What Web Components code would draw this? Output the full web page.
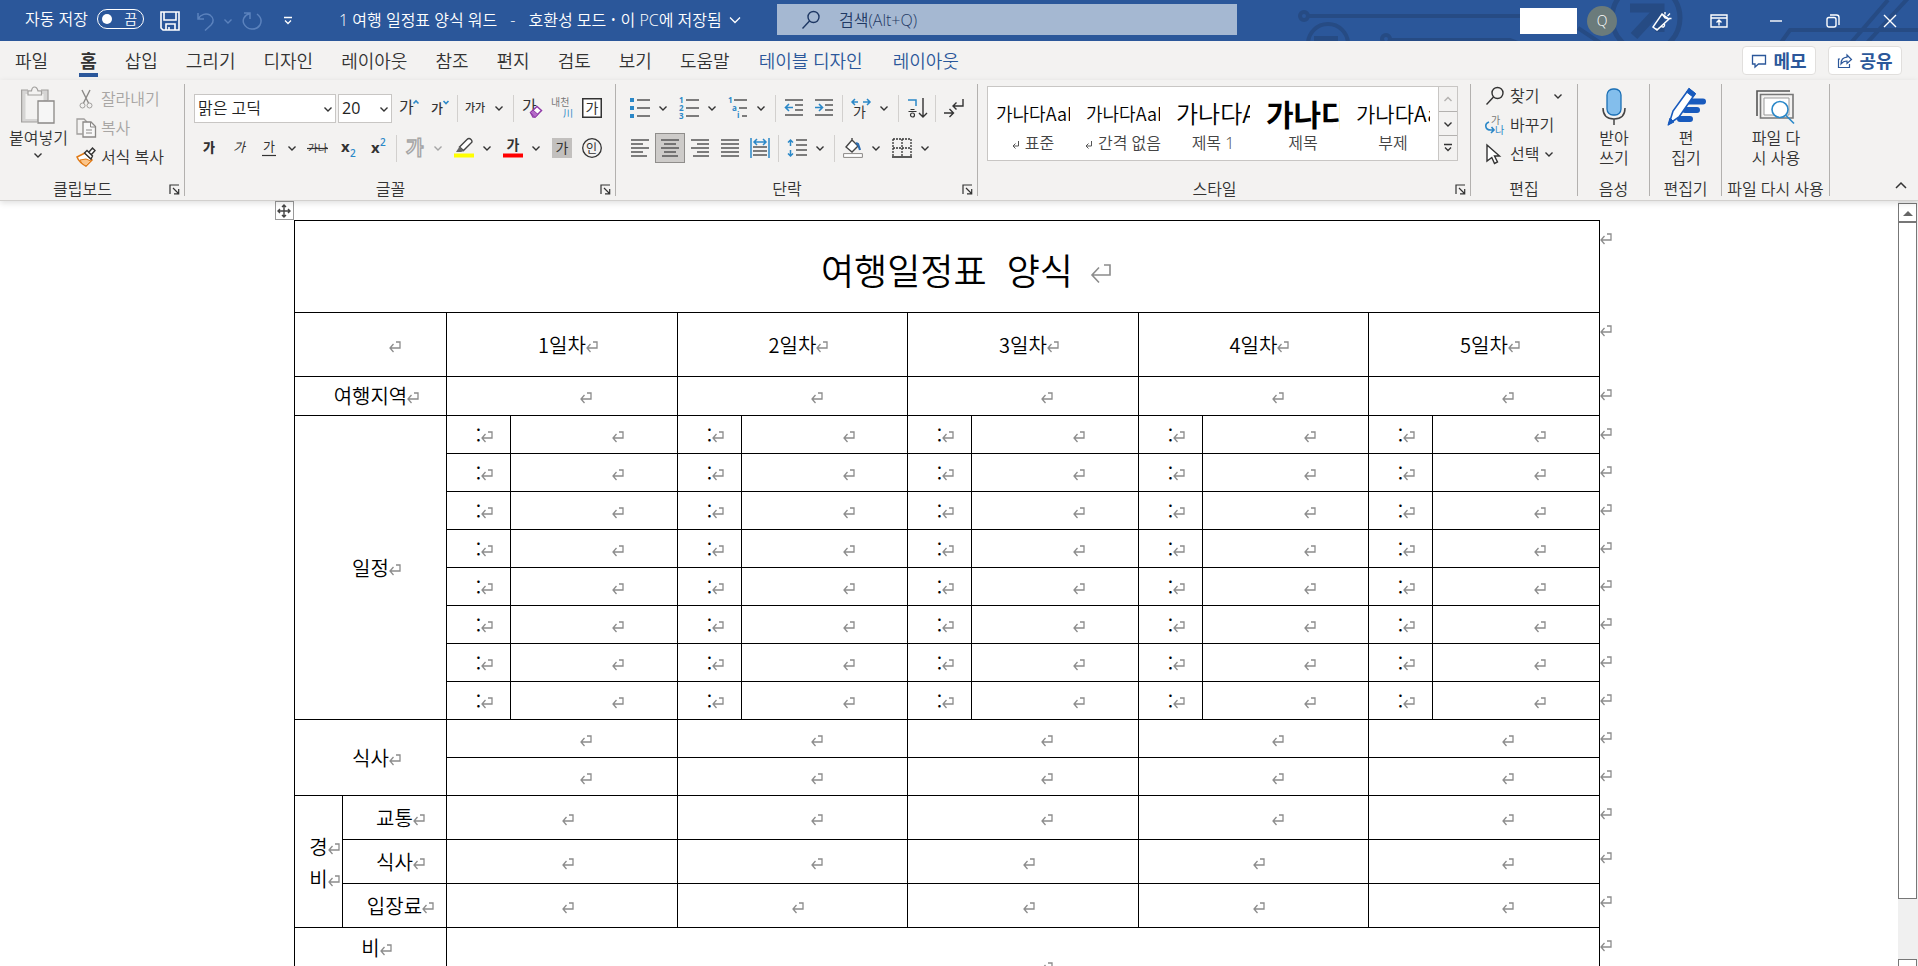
<!DOCTYPE html>
<html lang="ko">
<head>
<meta charset="utf-8">
<title>1 여행 일정표 양식 워드</title>
<style>
    html, body {
        margin: 0;
        height: 100%;
        overflow: hidden;
    }

    body {
        --fontBody: "Open Sans", "Noto Sans CJK KR", sans-serif;
        --fontDocument: "Noto Sans CJK KR", sans-serif;
        --colorBrand: #2b579a;
        --colorRibbon: #f3f2f1;
        --colorText: #333;
        --colorLine: #b3b1af;
        font-family: var(--fontBody);
        font-size: 16px;
        font-weight: 350;
        line-height: 20px;
        color: var(--colorText);
    }
</style>
</head>
<body>
<word-app></word-app>

<script>
const KO = 'font-family="Noto Sans CJK KR, sans-serif"';
const lines = (rows, color = '#555') => rows.map(([x1, x2, y]) =>
    `<path d="M${x1} ${y}H${x2}" stroke="${color}" stroke-width="1.5"/>`).join('');

// every icon: [width, height, markup]
const icons = {
    chevron: [10, 10, '<path d="M1.5 3.5L5 7l3.5-3.5" stroke-width="1.4"/>'],
    chevronUp: [10, 10, '<path d="M1.5 7L5 3.5 8.500 7" stroke-width="1.4"/>'],
    titleChevron: [12, 12, '<path d="M1 3.500l5 5 5-5" stroke-width="1.300"/>'],
    collapse: [12, 12, '<path d="M1 9l5-5 5 5" stroke-width="1.500"/>'],
    more: [10, 10, '<path d="M1 1.500h8M2 4.500l3 3 3-3" stroke-width="1.300"/>'],
    launcher: [11, 11, '<path d="M1 10V1h9M4 4l5.500 5.500M9.700 5v4.800H5" stroke-width="1.200"/>'],
    save: [20, 20, '<path d="M1 1h18v18H3l-2-2zM4 1v8h12V1M6 19v-6h9v6M9 19v-3" stroke-width="1.600"/>'],
    undo: [20, 20, '<path d="M2 2v6h6M2 8c3-5 8-6 12-4 4 3 4 7 1 10l-6 5.500" stroke-width="1.500"/>'],
    redo: [20, 20, '<path d="M2 2h6v6M8 2.500C2 4 0 9 2 13c3 6 12 7 16 1 2-4 1-8-3-11" stroke-width="1.500"/>'],
    search: [20, 20, '<circle cx="12.500" cy="7" r="5.500" stroke-width="1.400"/><path d="M8.500 11L1.500 18.500" stroke-width="1.400"/>'],
    coming: [20, 20, '<path d="M1 16L10 3l7 5L5 19zM3.500 17.500c2 1.500 3 .5 4-1M9 15c2 2 4 1 3.500-2M10 3l3 4 4 1M13 3.500V1M15.500 5L18 2.500M17 7.500h2.500" stroke-width="1.400"/>'],
    display: [18, 16, '<path d="M1 2h16v12H1zM1 5h16M9 12.500v-5M6.500 9.500L9 7l2.500 2.500" stroke-width="1.400"/>'],
    min: [14, 14, '<path d="M1 7h12" stroke-width="1.400"/>'],
    restore: [14, 14, '<rect x="1" y="3.500" width="9" height="9.500" rx="2" stroke-width="1.400"/><path d="M4 1h6.500Q13 1 13 3.500V11" stroke-width="1.400"/>'],
    close: [14, 14, '<path d="M1 1l12 12M13 1L1 13" stroke-width="1.400"/>'],
    memo: [16, 16, '<path d="M1.500 2.500h13v8.500H7.500L4 14v-3H1.500z" stroke-width="1.300"/>'],
    share: [16, 16, '<path d="M3 6H1.500v8.500h11V11M10 2l4.500 4.500L10 10.500V8C7 8 5.500 9 4 11c0-4 2-6.500 6-6.800z" stroke-width="1.200"/>'],
    paste: [34, 38, '<path d="M0 4h27v32H0z" fill="#d6d5d4" stroke="none"/><path d="M4.500 8h18v25h-18z" fill="#f3f2f1" stroke="none"/><path d="M16 36H.6V4H7M20 4h7v10" stroke="#a19f9d" stroke-width="1.200"/><path d="M7 9V5h3.500Q11 1 13.500 1T17 5h3.500v4z" fill="#f3f2f1" stroke="#a19f9d" stroke-width="1.200"/><path d="M17 15h16v22H17z" fill="#f6f6f6" stroke="#8a8886" stroke-width="1.300"/>'],
    cut: [20, 20, '<path d="M6 1l6.500 13M14 1L7.500 14" stroke="#8a8886" stroke-width="1.400"/><circle cx="6.500" cy="16.500" r="2.500" stroke="#a19f9d"/><circle cx="13.500" cy="16.500" r="2.500" stroke="#a19f9d"/>'],
    copy: [20, 20, '<path d="M6.500 16H1V1h7l3 3" stroke="#a19f9d" stroke-width="1.300"/><path d="M7 4h8l4.500 4.500V19H7z" fill="#f8f8f8" stroke="#8a8886" stroke-width="1.300"/><path d="M14.500 4v5h5M10 12h6M10 15h6" stroke="#8a8886"/>'],
    brush: [20, 20, '<path d="M1 10l8-4 7 7-6 6C8 18 3 15 1 10z" fill="#fff" stroke="#e07b18" stroke-width="1.500"/><path d="M4 13l6-1 5 2-5 5c-2-1-5-3-6-6z" fill="#fbc58a" stroke="#e07b18"/><path d="M8.500 6L11 3.500 16.500 9 15 12zM13 5l3.500-4L19 3.500 15.500 7.500" fill="#fff" stroke="#333" stroke-width="1.400"/>'],
    grow: [20, 20, `<text ${KO} x="0" y="15" font-size="16">가</text><path d="M14.500 5.500L17 3l2.500 2.500" stroke="#2b88c8" stroke-width="1.600"/>`],
    shrink: [20, 20, `<text ${KO} x="2" y="15" font-size="13" font-weight="500">가</text><path d="M14.500 3L17 5.500 19.500 3" stroke="#2b88c8" stroke-width="1.600"/>`],
    caseKo: [28, 20, `<text ${KO} x="3" y="14" font-size="11" font-weight="500">가가</text>`],
    clear: [20, 20, `<text ${KO} x="0" y="14" font-size="16">가</text><path d="M8.500 14.500l6.500-6 4.500 4-6.500 6.500H11z" fill="#fff" stroke="#8f3aa8" stroke-width="1.500"/><path d="M11 12l5 4.500-3 3-4.500-5z" fill="#b46ac8" stroke="#8f3aa8"/>`],
    ruby: [22, 22, `<text ${KO} x="0" y="9" font-size="10" fill="#777">내천</text><text ${KO} x="12" y="20" font-size="10" fill="#2b88c8">川</text>`],
    boxed: [20, 20, `<rect x="0.750" y="0.750" width="18.500" height="18.500" fill="#fff" stroke="#333" stroke-width="1.500"/><text ${KO} x="3.500" y="15" font-size="14">가</text>`],
    bold: [20, 20, `<text ${KO} x="4" y="14" font-size="13" font-weight="900">가</text>`],
    italic: [20, 20, `<text ${KO} x="4" y="14" font-size="13" font-style="italic">가</text>`],
    under: [20, 20, `<text ${KO} x="4" y="13" font-size="13">가</text><path d="M3 17.500h14" stroke-width="1.200"/>`],
    strike: [22, 20, `<text ${KO} x="1" y="14" font-size="10.500">가나</text><path d="M0 10.500h21" stroke-width="1.200"/>`],
    sub: [20, 20, '<text x="3" y="14" font-size="15" font-weight="700" font-family="Open Sans, sans-serif">x</text><text x="12" y="19" font-size="10" font-weight="600" fill="#2b88c8" font-family="Open Sans, sans-serif">2</text>'],
    sup: [20, 20, '<text x="3" y="15" font-size="15" font-weight="700" font-family="Open Sans, sans-serif">x</text><text x="12" y="8" font-size="10" font-weight="600" fill="#2b88c8" font-family="Open Sans, sans-serif">2</text>'],
    effect: [20, 20, `<text ${KO} x="1" y="17" font-size="19" font-weight="700" style="fill:#eee;stroke:#a5a5a5;stroke-width:1.4">가</text>`],
    marker: [20, 20, '<path d="M5.500 9L13 1.500Q15-.5 17 1.500T17 5L9.500 12.500z" fill="#fff" stroke="#444" stroke-width="1.400"/><path d="M5.500 8.500L10 13l-3 1H2z" fill="#666" stroke="none"/><path d="M0 15.500h20v4H0z" fill="#ff0" stroke="none"/>'],
    color: [20, 20, `<text ${KO} x="3.500" y="12" font-size="14" font-weight="700">가</text><path d="M0 15.500h20v4H0z" fill="#f00" stroke="none"/>`],
    shade: [20, 20, `<path d="M0 0h20v20H0z" fill="#c2c0be" stroke="none"/><text ${KO} x="3.500" y="15" font-size="14">가</text>`],
    circled: [20, 20, `<circle cx="10" cy="10" r="9.300" stroke="#333" stroke-width="1.300"/><text ${KO} x="4" y="14.500" font-size="12">인</text>`],
    bullets: [20, 20, '<path d="M0 0h4v4H0zM0 8h4v4H0zM0 16h4v4H0z" fill="#2b88c8" stroke="none"/>' + lines([[7, 20, 2], [7, 20, 10], [7, 20, 18]])],
    numbers: [20, 22, '<g font-family="Open Sans, sans-serif" font-size="8" font-weight="700" fill="#2b88c8"><text x="0" y="6">1</text><text x="0" y="14">2</text><text x="0" y="22">3</text></g>' + lines([[7, 20, 3], [7, 20, 11], [7, 20, 19]])],
    levels: [20, 22, '<g font-family="Open Sans, sans-serif" font-size="8" font-weight="700" fill="#2b88c8"><text x="0" y="6">1</text><text x="4" y="14">a</text><text x="9" y="21">i</text></g>' + lines([[6, 19, 3], [11, 19, 11], [14, 19, 19]])],
    outdent: [20, 20, lines([[1, 19, 2], [11, 19, 7], [11, 19, 12], [1, 19, 17]]) + '<path d="M9 9.500H2M5 6L1.500 9.500 5 13" stroke="#2b88c8" stroke-width="1.600"/>'],
    indent: [20, 20, lines([[1, 19, 2], [11, 19, 7], [11, 19, 12], [1, 19, 17]]) + '<path d="M1 9.500h7M5 6l3.500 3.500L5 13" stroke="#2b88c8" stroke-width="1.600"/>'],
    spacing: [20, 20, `<text ${KO} x="2" y="19" font-size="14">가</text><path d="M7 4H1M4 1L1 4l3 3M12 4h7M16 1l3 3-3 3" stroke="#2b88c8" stroke-width="1.500"/>`],
    sort: [20, 20, '<path d="M1 2h8v6" stroke="#2b88c8" stroke-width="1.500"/><path d="M3.500 11.500h4M1.500 13.500h8" stroke-width="1.200"/><circle cx="5.500" cy="17" r="2" stroke-width="1.200"/><path d="M16 0v19M12 15l4 4 4-4" stroke-width="1.400"/>'],
    marks: [22, 20, '<path d="M20 1v7H10M13.500 4.500L10 8l3.500 3.500M1 15h9M6.500 11l4 4-4 4" stroke-width="1.400"/>'],
    alignL: [18, 18, lines([[0, 18, 1], [0, 12, 5], [0, 18, 9], [0, 12, 13], [0, 16, 17]])],
    alignC: [18, 18, lines([[0, 18, 1], [3, 15, 5], [0, 18, 9], [3, 15, 13], [1, 17, 17]])],
    alignR: [18, 18, lines([[0, 18, 1], [6, 18, 5], [0, 18, 9], [6, 18, 13], [2, 18, 17]])],
    alignJ: [18, 18, lines([[0, 18, 1], [0, 18, 5], [0, 18, 9], [0, 18, 13], [0, 18, 17]])],
    spread: [20, 20, lines([[3, 17, 9], [3, 17, 13], [3, 17, 17]]) + '<path d="M1 0v20M19 0v20M4 4h12M7 1L4 4l3 3M13 1l3 3-3 3" stroke="#2b88c8" stroke-width="1.500"/>'],
    leading: [20, 20, lines([[9, 20, 2], [9, 20, 7], [9, 20, 12], [9, 20, 17]]) + '<path d="M3.500 2v6M1 4.500L3.500 2 6 4.500M3.500 12v6M1 15.500L3.500 18 6 15.500" stroke="#2b88c8" stroke-width="1.500"/>'],
    fill: [20, 20, '<path d="M3 9l6-7 6 6-6 6zM9 2V0" fill="#fff" stroke="#444" stroke-width="1.400"/><path d="M13 5l2 1 2 6" stroke="#2b6cb0" stroke-width="2.200"/><path d="M.6 15.600h18.800v3.800H.6z" fill="#fff" stroke="#8a8886"/>'],
    borders: [20, 20, '<path d="M1 1h18v18M1 1v18M10 1v18M1 10h18" stroke-dasharray="2 1" stroke-width="1.300"/><path d="M0 19h20" stroke-width="1.600"/>'],
    replace: [20, 20, `<text ${KO} x="6" y="9" font-size="10" fill="#777">가</text><text ${KO} x="10" y="18.500" font-size="10" fill="#2b88c8">나</text><path d="M4 7C-1 9 0 15 6 15h3M6.500 12L9 15l-3 3" stroke="#2b88c8" stroke-width="1.600"/>`],
    pointer: [20, 20, '<path d="M2 1l12.500 11H9.500l3 6-3 1.500-2.700-6L2 17z" fill="#fff" stroke-width="1.400"/>'],
    mic: [26, 38, '<rect x="6" y="1" width="14" height="26" rx="6" fill="#83beec" stroke="#1a6fb5" stroke-width="1.300"/><path d="M2 20q0 11 11 11t11-11M13 31v6" stroke="#444" stroke-width="1.500"/>'],
    editor: [40, 40, '<path d="M22 14.500h15M19 23h12M14 32h10" stroke="#185abd" stroke-width="6" stroke-linecap="round"/><path d="M3 37l4-13L23 2l6 5-16 23z" fill="#fff" stroke="#185abd" stroke-width="1.600"/><path d="M20.500 5L23 1.500l6.500 5L27 10zM2 38l2-7 4 4z" fill="#185abd" stroke="#185abd"/>'],
    reuse: [40, 36, '<path d="M1 27V2h33" stroke="#555" stroke-width="1.600"/><path d="M4.500 29V5.500H37V29z" stroke="#777" stroke-width="1.600"/><path d="M8 9h25v17H8z" fill="#fff" stroke="#999"/><circle cx="24" cy="20.500" r="8" fill="#fff" stroke="#2b88c8" stroke-width="1.600"/><path d="M30 26.500l8 8" stroke="#2b88c8" stroke-width="1.600"/>'],
    returnMark: [12, 12, '<path d="M7 1h4v6H1M4.500 3L1 7l3.500 4" stroke="#8c8c8c" stroke-width="1.300"/>'],
    bigReturn: [22, 22, '<path d="M14 2h6v10H2M9 4.500L2 12l7 7.500" stroke="#8c8c8c" stroke-width="1.600"/>'],
    move: [14, 14, '<path d="M7 1v12M1 7h12M5 3l2-2 2 2M5 11l2 2 2-2M3 5L1 7l2 2M11 5l2 2-2 2" stroke-width="1.400"/>'],
    scrollUp: [10, 6, '<path d="M0 6l5-5 5 5z" fill="#666" stroke="none"/>']
};

class OfficeIcon extends HTMLElement {
    constructor() {
        super();
        this.attachShadow({mode: 'open'});
    }

    connectedCallback() {
        const [w, h, body] = icons[this.getAttribute('name')];
        this.shadowRoot.innerHTML = `
            <style>
                :host { display: inline-block; flex: none; line-height: 0; font-weight: 400; }
                svg { display: block; overflow: visible; fill: none; stroke: currentColor; }
                text { fill: currentColor; stroke: none; }
                text[fill="#2b88c8"], g[fill="#2b88c8"] text { fill: #2b88c8; }
                text[fill="#777"] { fill: #777; }
            </style>
            <svg width="${w}" height="${h}" viewBox="0 0 ${w} ${h}" aria-hidden="true">${body}</svg>`;
    }
}
customElements.define('office-icon', OfficeIcon);

// icon button of the ribbon, "menu" adds the drop-down arrow
class ToolButton extends HTMLElement {
    constructor() {
        super();
        this.attachShadow({mode: 'open'});
        const label = this.getAttribute('label');
        const menu = this.hasAttribute('menu')
            ? `<button class="menu" aria-label="${label} 옵션"><office-icon name="chevron"></office-icon></button>` : '';
        this.shadowRoot.innerHTML = `
            <style>
                :host { display: flex; flex: none; }
                button {
                    display: flex;
                    align-items: center;
                    justify-content: center;
                    width: 30px;
                    height: 30px;
                    padding: 0;
                    border: 0;
                    background: none;
                    color: inherit;
                }
                .menu { width: 16px; margin-right: 3px; }
                :host([pressed]) button {
                    background: #cdcbc9;
                    border: 1px solid #8f8d8b;
                }
                :host([muted]) .menu { color: #a5a5a5; }
            </style>
            <button aria-label="${label}"><office-icon name="${this.getAttribute('icon')}"></office-icon></button>${menu}`;
    }
}
customElements.define('tool-button', ToolButton);

class RibbonGroup extends HTMLElement {
    constructor() {
        super();
        this.attachShadow({mode: 'open'});
        const launcher = this.hasAttribute('launcher')
            ? '<button aria-label="자세히"><office-icon name="launcher"></office-icon></button>' : '';
        this.shadowRoot.innerHTML = `
            <style>
                :host {
                    display: flex;
                    flex-direction: column;
                    flex: none;
                    border-right: 1px solid var(--colorLine);
                }
                .body { flex: 1; padding: 4px 8px 0 9px; }
                footer {
                    display: flex;
                    align-items: center;
                    height: 14px;
                    white-space: nowrap;
                }
                span { flex: 1; text-align: center; }
                button {
                    display: flex;
                    padding: 0 4px;
                    border: 0;
                    background: none;
                    color: inherit;
                }
            </style>
            <div class="body"><slot></slot></div>
            <footer><span>${this.getAttribute('label')}</span>${launcher}</footer>`;
    }
}
customElements.define('ribbon-group', RibbonGroup);

class StyleCard extends HTMLElement {
    constructor() {
        super();
        this.attachShadow({mode: 'open'});
        this.shadowRoot.innerHTML = `
            <style>
                :host { display: block; flex: 1 1 0; min-width: 0; }
                button {
                    display: block;
                    width: 100%;
                    height: 100%;
                    padding: 0 8px 2px;
                    border: 0;
                    background: none;
                    font: inherit;
                    color: #444;
                }
                .sample {
                    display: flex;
                    align-items: center;
                    height: 40px;
                    overflow: hidden;
                    white-space: nowrap;
                    font-family: var(--fontDocument);
                    color: #000;
                }
                .name {
                    display: flex;
                    align-items: center;
                    justify-content: center;
                    gap: 6px;
                    white-space: nowrap;
                }
                svg { flex: none; margin-top: 4px; }
            </style>
            <button>
                <span class="sample" style="font-size: ${this.getAttribute('size')}px; font-weight: ${this.getAttribute('weight') || 'inherit'}">가나다AaBb</span>
                <span class="name">${this.hasAttribute('para') ? '<svg width="7" height="8" fill="none" stroke="#555"><path d="M6.500 0v5H1M3.500 2.500L1 5l2.500 2.500"/></svg>' : ''}<slot></slot></span>
            </button>`;
    }
}
customElements.define('style-card', StyleCard);

class TitleBar extends HTMLElement {
    constructor() {
        super();
        this.attachShadow({mode: 'open'});
        this.shadowRoot.innerHTML = `
            <style>
                :host {
                    position: relative;
                    display: grid;
                    grid-template-columns: minmax(0, 777fr) minmax(0, 460fr) minmax(0, 681fr);
                    align-items: center;
                    height: 41px;
                    background: var(--colorBrand);
                    color: #fff;
                    overflow: hidden;
                }
                .art { position: absolute; right: 0; top: 0; }
                .left, .right, label.auto, .search { display: flex; align-items: center; white-space: nowrap; }
                .left { padding-left: 25px; }
                .right { position: relative; justify-content: flex-end; }
                button { display: flex; align-items: center; justify-content: center; padding: 0; border: 0; background: none; color: inherit; font: inherit; }
                .auto { gap: 9px; margin: 0 15px 4px 0; }
                .auto span { position: relative; width: 45px; height: 18px; border: 1px solid #fff; border-radius: 10px; }
                .auto span::before { content: ""; position: absolute; left: 4px; top: 4px; width: 10px; height: 10px; border-radius: 50%; background: #fff; }
                .auto b { position: absolute; right: 6px; top: -1px; font-weight: inherit; font-size: 14px; }
                .auto input { position: absolute; inset: 0; margin: 0; opacity: 0; }
                .tool { width: 22px; height: 26px; }
                .dim { color: #5b82bd; }
                .undo { margin-left: 14px; }
                .redo { margin: 0 14px 0 2px; }
                .name { margin: 0 0 2px 40px; gap: 13px; }
                .name office-icon { margin-left: -6px; }
                .search { height: 31px; margin-bottom: 2px; background: #a5b8d2; color: #1f3864; }
                .search office-icon { margin: 0 18px 0 24px; }
                .search input { flex: 1; min-width: 0; border: 0; padding: 0; background: none; font: inherit; color: inherit; outline: 0; }
                .search input::placeholder { color: #1f3864; opacity: 1; }
                .user { width: 57px; height: 26px; margin-right: 10px; background: #fff; }
                .avatar { width: 30px; height: 30px; border-radius: 50%; background: #6b7b7b; font-size: 14px; margin-right: 16px; }
                .win { width: 57px; height: 38px; }
            </style>
            <svg class="art" width="648" height="41" fill="none" stroke="#264b84" stroke-width="4" aria-hidden="true">
                <circle cx="34" cy="16" r="4"/><path d="M38 16h212M120 40h120l8 3M308 28l24 16M510 44l10-14h128M580 44l38-44M596 44l44-48"/>
                <circle cx="58" cy="44" r="20"/><path d="M46 38h20v6H46z" fill="#264b84"/><circle cx="116" cy="39" r="4"/>
                <circle cx="376" cy="18" r="34" stroke-width="5"/><path d="M360 8h30v24M390 8l-26 28" stroke-width="9"/>
            </svg>
            <div class="left">
                <label class="auto">자동 저장 <span><input type="checkbox"><b>끔</b></span></label>
                <button class="tool" aria-label="저장"><office-icon name="save"></office-icon></button>
                <button class="tool dim undo" aria-label="실행 취소"><office-icon name="undo"></office-icon></button>
                <button class="tool dim" aria-label="실행 취소 목록"><office-icon name="chevron"></office-icon></button>
                <button class="tool dim redo" aria-label="다시 실행"><office-icon name="redo"></office-icon></button>
                <button class="tool" aria-label="빠른 실행 도구 모음 사용자 지정"><office-icon name="more"></office-icon></button>
                <button class="name"><span>1 여행 일정표 양식 워드</span><span>-</span><span>호환성 모드 • 이 PC에 저장됨</span><office-icon name="titleChevron"></office-icon></button>
            </div>
            <label class="search"><office-icon name="search"></office-icon><input type="text" aria-label="검색" placeholder="검색(Alt+Q)"></label>
            <div class="right">
                <div class="user"></div>
                <button class="avatar" aria-label="계정">Q</button>
                <button class="win" aria-label="출시 예정 기능"><office-icon name="coming"></office-icon></button>
                <button class="win" aria-label="리본 메뉴 표시 옵션"><office-icon name="display"></office-icon></button>
                <button class="win" aria-label="최소화"><office-icon name="min"></office-icon></button>
                <button class="win" aria-label="이전 크기로 복원"><office-icon name="restore"></office-icon></button>
                <button class="win" aria-label="닫기"><office-icon name="close"></office-icon></button>
            </div>`;
    }
}
customElements.define('title-bar', TitleBar);

class TabStrip extends HTMLElement {
    constructor() {
        super();
        this.attachShadow({mode: 'open'});
        const tabs = ['파일', '홈', '삽입', '그리기', '디자인', '레이아웃', '참조', '편지', '검토', '보기', '도움말', '테이블 디자인', '레이아웃'];
        this.shadowRoot.innerHTML = `
            <style>
                :host {
                    display: flex;
                    align-items: center;
                    justify-content: space-between;
                    height: 39px;
                    padding-right: 16px;
                    background: var(--colorRibbon);
                }
                nav, .actions { display: flex; }
                button { display: flex; align-items: center; border: 0; background: none; font: inherit; font-size: 18px; color: inherit; white-space: nowrap; }
                nav button { position: relative; height: 39px; padding: 0 14px; }
                nav button:first-child { padding: 0 18px 0 15px; }
                nav .on { font-weight: 700; }
                nav .on::after { content: ""; position: absolute; left: 13px; right: 13px; bottom: 3px; height: 4px; background: var(--colorBrand); }
                nav .context { padding: 0 15px; color: var(--colorBrand); }
                .actions { gap: 12px; }
                .actions button { gap: 6px; width: 74px; height: 29px; padding: 0; justify-content: center; border: 1px solid #e1dfdd; border-radius: 4px; background: #fff; color: var(--colorBrand); font-weight: 700; }
            </style>
            <nav>${tabs.map((tab, i) => `<button class="${i === 1 ? 'on' : i > 10 ? 'context' : ''}">${tab}</button>`).join('')}</nav>
            <div class="actions">
                <button><office-icon name="memo"></office-icon>메모</button>
                <button><office-icon name="share"></office-icon>공유</button>
            </div>`;
    }
}
customElements.define('tab-strip', TabStrip);

const ribbonTemplate = document.createElement('template');
ribbonTemplate.innerHTML = `
    <style>
        :host {
            position: relative;
            z-index: 1;
            display: flex;
            height: 112px;
            padding: 4px 0;
            background: var(--colorRibbon);
            border-bottom: 1px solid #d2d0ce;
            box-shadow: 0 2px 6px rgba(0, 0, 0, .13);
        }
        button { padding: 0; border: 0; background: none; font: inherit; color: inherit; white-space: nowrap; }
        .row { display: flex; align-items: center; height: 40px; }
        .sep { width: 1px; height: 27px; margin: 0 3px; background: #d2d0ce; }
        .clip { display: flex; gap: 8px; width: 167px; margin-top: -2px; }
        .big { display: flex; flex-direction: column; align-items: center; gap: 2px; }
        .big office-icon { margin-bottom: 2px; }
        .stack { display: flex; flex-direction: column; }
        .stack button { display: flex; align-items: center; gap: 5px; height: 29px; }
        .clip .stack { margin-top: -2px; }
        .stack .off { color: #a8a6a4; }
        .combo { position: relative; margin-right: 2px; }
        .combo select { width: 142px; height: 29px; padding: 0 3px; border: 1px solid #c8c6c4; border-radius: 0; background: #fff; appearance: none; font: inherit; color: #222; }
        .combo .short { width: 54px; font-weight: 400; }
        .combo office-icon { position: absolute; right: 3px; top: 10px; pointer-events: none; }
        .styles { flex: 1 1 0; min-width: 0; }
        .gallery { display: flex; height: 73px; margin: -2px 4px 0 0; border: 1px solid #c8c6c4; background: #fff; }
        .scroll { display: flex; flex-direction: column; flex: none; width: 18px; background: var(--colorRibbon); border-left: 1px solid #c8c6c4; }
        .scroll button { display: flex; flex: 1; align-items: center; justify-content: center; }
        .scroll button + button { border-top: 1px solid #b3b1af; }
        .scroll button:first-child { color: #b3b1af; }
        .edit { width: 84px; margin: -7px 0 0 5px; }
        .edit .far { margin-left: 9px; }
        .two { width: 54px; }
        .wide { width: 90px; }
        .two .big, .wide .big { width: 100%; margin-top: -2px; gap: 0; }
        .two office-icon, .wide office-icon { margin-bottom: 0; }
        .two .big span, .wide .big span { display: flex; align-items: center; height: 40px; }
        .pic { display: flex; align-items: center; justify-content: center; height: 42px; }
        .end { display: flex; flex: none; width: 88px; align-items: flex-end; justify-content: flex-end; padding: 0 11px 1px 0; box-sizing: border-box; }
    </style>
    <ribbon-group label="클립보드" launcher>
        <div class="clip">
            <button class="big"><office-icon name="paste"></office-icon>붙여넣기<office-icon name="chevron"></office-icon></button>
            <div class="stack">
                <button class="off"><office-icon name="cut"></office-icon>잘라내기</button>
                <button class="off"><office-icon name="copy"></office-icon>복사</button>
                <button><office-icon name="brush"></office-icon>서식 복사</button>
            </div>
        </div>
    </ribbon-group>
    <ribbon-group label="글꼴" launcher>
        <div class="row">
            <div class="combo"><select aria-label="글꼴"><option>맑은 고딕</option></select><office-icon name="chevron"></office-icon></div>
            <div class="combo"><select class="short" aria-label="글꼴 크기"><option>20</option></select><office-icon name="chevron"></office-icon></div>
            <tool-button icon="grow" label="글꼴 크기 크게"></tool-button>
            <tool-button icon="shrink" label="글꼴 크기 작게"></tool-button>
            <i class="sep"></i>
            <tool-button icon="caseKo" label="대/소문자 바꾸기" menu></tool-button>
            <i class="sep"></i>
            <tool-button icon="clear" label="모든 서식 지우기"></tool-button>
            <tool-button icon="ruby" label="윗주 달기"></tool-button>
            <tool-button icon="boxed" label="문자 테두리"></tool-button>
        </div>
        <div class="row">
            <tool-button icon="bold" label="굵게"></tool-button>
            <tool-button icon="italic" label="기울임꼴"></tool-button>
            <tool-button icon="under" label="밑줄" menu></tool-button>
            <tool-button icon="strike" label="취소선"></tool-button>
            <tool-button icon="sub" label="아래 첨자"></tool-button>
            <tool-button icon="sup" label="위 첨자"></tool-button>
            <i class="sep"></i>
            <tool-button icon="effect" label="텍스트 효과" menu muted></tool-button>
            <tool-button icon="marker" label="텍스트 강조 색" menu></tool-button>
            <tool-button icon="color" label="글꼴 색" menu></tool-button>
            <tool-button icon="shade" label="문자 음영"></tool-button>
            <tool-button icon="circled" label="원 문자"></tool-button>
        </div>
    </ribbon-group>
    <ribbon-group label="단락" launcher>
        <div class="row">
            <tool-button icon="bullets" label="글머리 기호" menu></tool-button>
            <tool-button icon="numbers" label="번호 매기기" menu></tool-button>
            <tool-button icon="levels" label="다단계 목록" menu></tool-button>
            <i class="sep"></i>
            <tool-button icon="outdent" label="내어쓰기"></tool-button>
            <tool-button icon="indent" label="들여쓰기"></tool-button>
            <i class="sep"></i>
            <tool-button icon="spacing" label="한글 레이아웃" menu></tool-button>
            <i class="sep"></i>
            <tool-button icon="sort" label="정렬"></tool-button>
            <i class="sep"></i>
            <tool-button icon="marks" label="편집 기호 표시"></tool-button>
        </div>
        <div class="row">
            <tool-button icon="alignL" label="왼쪽 맞춤"></tool-button>
            <tool-button icon="alignC" label="가운데 맞춤" pressed></tool-button>
            <tool-button icon="alignR" label="오른쪽 맞춤"></tool-button>
            <tool-button icon="alignJ" label="양쪽 맞춤"></tool-button>
            <tool-button icon="spread" label="균등 분할"></tool-button>
            <i class="sep"></i>
            <tool-button icon="leading" label="선 및 단락 간격" menu></tool-button>
            <i class="sep"></i>
            <tool-button icon="fill" label="음영" menu></tool-button>
            <tool-button icon="borders" label="테두리" menu></tool-button>
        </div>
    </ribbon-group>
    <ribbon-group class="styles" label="스타일" launcher>
        <div class="gallery">
            <style-card size="18" para>표준</style-card>
            <style-card size="18" para>간격 없음</style-card>
            <style-card size="24">제목 1</style-card>
            <style-card size="30" weight="700">제목</style-card>
            <style-card size="21">부제</style-card>
            <div class="scroll">
                <button aria-label="위로"><office-icon name="chevronUp"></office-icon></button>
                <button aria-label="아래로"><office-icon name="chevron"></office-icon></button>
                <button aria-label="자세히"><office-icon name="more"></office-icon></button>
            </div>
        </div>
    </ribbon-group>
    <ribbon-group label="편집">
        <div class="stack edit">
            <button><office-icon name="search"></office-icon>찾기<office-icon class="far" name="chevron"></office-icon></button>
            <button><office-icon name="replace"></office-icon>바꾸기</button>
            <button><office-icon name="pointer"></office-icon>선택<office-icon name="chevron"></office-icon></button>
        </div>
    </ribbon-group>
    <ribbon-group label="음성">
        <div class="two"><button class="big"><div class="pic"><office-icon name="mic"></office-icon></div><span>받아<br>쓰기</span></button></div>
    </ribbon-group>
    <ribbon-group label="편집기">
        <div class="two"><button class="big"><div class="pic"><office-icon name="editor"></office-icon></div><span>편<br>집기</span></button></div>
    </ribbon-group>
    <ribbon-group label="파일 다시 사용">
        <div class="wide"><button class="big"><div class="pic"><office-icon name="reuse"></office-icon></div><span>파일 다<br>시 사용</span></button></div>
    </ribbon-group>
    <div class="end"><button aria-label="리본 메뉴 축소"><office-icon name="collapse"></office-icon></button></div>
`;

class RibbonBar extends HTMLElement {
    constructor() {
        super();
        this.attachShadow({mode: 'open'});
        this.shadowRoot.appendChild(ribbonTemplate.content.cloneNode(true));
    }
}
customElements.define('ribbon-bar', RibbonBar);

// paragraph mark that hangs after the text and takes no width
class ReturnMark extends HTMLElement {
    constructor() {
        super();
        this.attachShadow({mode: 'open'});
        this.shadowRoot.innerHTML = `
            <style>
                :host { display: inline-block; width: 0; }
                :host([big]) office-icon { margin-left: 17px; }
            </style>
            <office-icon name="${this.hasAttribute('big') ? 'bigReturn' : 'returnMark'}"></office-icon>`;
    }
}
customElements.define('return-mark', ReturnMark);

class TripTable extends HTMLElement {
    constructor() {
        super();
        this.attachShadow({mode: 'open'});
        const mark = '<return-mark></return-mark>';
        const end = `<td class="end">${mark}</td>`;
        const days = [1, 2, 3, 4, 5];
        const wide = (pads) => pads.map(pad => `<td colspan="2"${pad ? ' class="pad"' : ''}>${mark}</td>`).join('');
        const all = [1, 1, 1, 1, 1];
        let rows = '';
        for (let i = 0; i < 8; i++) {
            rows += `<tr>${i ? '' : `<th colspan="2" rowspan="8">일정${mark}</th>`}${days.map(() => `<td>:${mark}</td><td class="pad">${mark}</td>`).join('')}${end}</tr>`;
        }
        this.shadowRoot.innerHTML = `
            <style>
                :host { display: block; position: relative; color: #000; font-family: var(--fontDocument); }
                .handle { position: absolute; left: -19px; top: -19px; width: 19px; height: 19px; display: flex; align-items: center; justify-content: center; padding: 0; border: 1px solid #999; background: #fff; color: #444; }
                table { width: 100%; table-layout: fixed; border-collapse: collapse; font-size: 20px; }
                tr { height: 38px; }
                .title { height: 92px; }
                .days { height: 64px; }
                .area { height: 39px; }
                .cost { height: 44px; }
                .note { height: 76px; }
                th, td { padding: 0; border: 1px solid #000; text-align: center; font-weight: inherit; white-space: nowrap; }
                .pad { padding-left: 37px; }
                .end { border: 0; padding: 10px 0 0 0; text-align: left; vertical-align: top; line-height: 12px; }
                .title th { padding-top: 4px; font-size: 36px; line-height: 44px; }
                .tall { line-height: 32px; padding-top: 2px; }
                .note th { vertical-align: top; padding-top: 10px; }
            </style>
            <button class="handle" aria-label="표 이동"><office-icon name="move"></office-icon></button>
            <table>
                <colgroup>
                    <col style="width: 48px"><col style="width: 104px">
                    ${days.map(d => `<col style="width: 64px"><col style="width: ${d % 2 ? 167 : 166}px">`).join('')}
                    <col style="width: 18px">
                </colgroup>
                <tr class="title"><th colspan="12">여행일정표&nbsp; 양식<return-mark big></return-mark></th>${end}</tr>
                <tr class="days"><th colspan="2" class="pad">${mark}</th>${days.map(d => `<th colspan="2">${d}일차${mark}</th>`).join('')}${end}</tr>
                <tr class="area"><th colspan="2">여행지역${mark}</th>${wide(all)}${end}</tr>
                ${rows}
                <tr><th colspan="2" rowspan="2">식사${mark}</th>${wide(all)}${end}</tr>
                <tr>${wide(all)}${end}</tr>
                <tr class="cost"><th rowspan="3" class="tall">경${mark}<br>비${mark}</th><th>교통${mark}</th>${wide([0, 1, 1, 1, 1])}${end}</tr>
                <tr class="cost"><th>식사${mark}</th>${wide([0, 1, 0, 0, 1])}${end}</tr>
                <tr class="cost"><th>입장료${mark}</th>${wide([0, 0, 0, 0, 1])}${end}</tr>
                <tr class="note"><th colspan="2">비${mark}</th><td colspan="10" class="pad">${mark}</td>${end}</tr>
            </table>`;
    }
}
customElements.define('trip-table', TripTable);

class ScrollBar extends HTMLElement {
    constructor() {
        super();
        this.attachShadow({mode: 'open'});
        this.shadowRoot.innerHTML = `
            <style>
                :host { display: flex; flex-direction: column; width: 19px; padding: 2px 1px 0 0; background: #f0f0f0; box-sizing: content-box; }
                button { display: flex; align-items: center; justify-content: center; box-sizing: border-box; height: 19px; padding: 0; border: 1px solid #777; background: #fff; }
                .thumb { flex: 677; }
                .thumb button { width: 100%; height: 100%; }
                .track { flex: 60; }
                .down { height: 7px; border-bottom: 0; }
            </style>
            <button aria-label="위로 스크롤"><office-icon name="scrollUp"></office-icon></button>
            <div class="thumb"><button aria-label="스크롤 상자"></button></div>
            <div class="track"></div>
            <button class="down" aria-label="아래로 스크롤"></button>`;
    }
}
customElements.define('scroll-bar', ScrollBar);

class WordApp extends HTMLElement {
    constructor() {
        super();
        this.attachShadow({mode: 'open'});
        this.shadowRoot.innerHTML = `
            <style>
                :host { display: flex; flex-direction: column; height: 100vh; }
                title-bar, tab-strip, ribbon-bar { flex: none; }
                main { display: flex; flex: 1; min-height: 0; background: #fff; }
                .page { display: grid; flex: 1; grid-template-columns: 294fr 1324fr 280fr; align-content: start; padding-top: 19px; overflow: hidden; }
                trip-table { grid-column: 2; }
            </style>
            <title-bar></title-bar>
            <tab-strip></tab-strip>
            <ribbon-bar></ribbon-bar>
            <main>
                <div class="page"><trip-table></trip-table></div>
                <scroll-bar></scroll-bar>
            </main>`;
    }
}
customElements.define('word-app', WordApp);
</script>
</body>
</html>
